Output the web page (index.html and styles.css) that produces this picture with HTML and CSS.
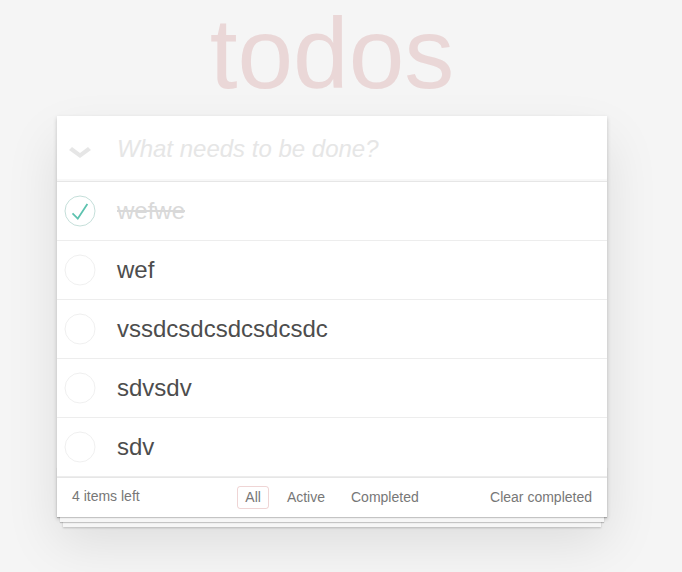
FILE: index.html
```html
<!DOCTYPE html>
<html lang="en">
<head>
<meta charset="utf-8">
<title>todos</title>
<link rel="stylesheet" href="styles.css">
</head>
<body>
<div class="page">
  <h1 class="title">todos</h1>
  <section class="todoapp">
    <header class="header">
      <span class="toggle-all">
        <svg width="22" height="11" viewBox="0 0 22 11"><polygon points="0,3 3,0 11,6 19,0 22,3 11,11" fill="#e6e6e6"/></svg>
      </span>
      <input class="new-todo" placeholder="What needs to be done?">
    </header>
    <ul class="todo-list">
      <li class="todo completed">
        <span class="check">
          <svg width="40" height="40" viewBox="-16.7 -16.7 133.3 133.3"><circle cx="50" cy="50" r="50" fill="none" stroke="#bddad5" stroke-width="3"/><path fill="#5dc2af" d="M72 25L42 71 27 56l-4 4 20 20 34-52z"/></svg>
        </span>
        <label class="todo-label">wefwe</label>
      </li>
      <li class="todo">
        <span class="check">
          <svg width="40" height="40" viewBox="-16.7 -16.7 133.3 133.3"><circle cx="50" cy="50" r="50" fill="none" stroke="#ededed" stroke-width="3"/></svg>
        </span>
        <label class="todo-label">wef</label>
      </li>
      <li class="todo">
        <span class="check">
          <svg width="40" height="40" viewBox="-16.7 -16.7 133.3 133.3"><circle cx="50" cy="50" r="50" fill="none" stroke="#ededed" stroke-width="3"/></svg>
        </span>
        <label class="todo-label">vssdcsdcsdcsdcsdc</label>
      </li>
      <li class="todo">
        <span class="check">
          <svg width="40" height="40" viewBox="-16.7 -16.7 133.3 133.3"><circle cx="50" cy="50" r="50" fill="none" stroke="#ededed" stroke-width="3"/></svg>
        </span>
        <label class="todo-label">sdvsdv</label>
      </li>
      <li class="todo">
        <span class="check">
          <svg width="40" height="40" viewBox="-16.7 -16.7 133.3 133.3"><circle cx="50" cy="50" r="50" fill="none" stroke="#ededed" stroke-width="3"/></svg>
        </span>
        <label class="todo-label">sdv</label>
      </li>
    </ul>
    <footer class="footer">
      <span class="todo-count">4 items left</span>
      <ul class="filters">
        <li><a class="filter selected">All</a></li>
        <li><a class="filter">Active</a></li>
        <li><a class="filter">Completed</a></li>
      </ul>
      <span class="clear-wrap"><button class="clear-completed">Clear completed</button></span>
    </footer>
  </section>
</div>
</body>
</html>
```
FILE: styles.css
```css
html, body {
  margin: 0;
  padding: 0;
}
body {
  background: #f5f5f5;
  color: #4d4d4d;
  font: 14px "Liberation Sans", Arial, sans-serif;
  line-height: 1.4em;
  min-height: 572px;
}
.page {
  width: 550px;
  margin: 0 0 0 57px;
  padding-top: 0;
  padding-bottom: 40px;
}
.title {
  margin: 0 0 10px 0;
  height: 106px;
  font-size: 100px;
  line-height: 106px;
  font-weight: 100;
  text-align: center;
  color: rgba(175, 47, 47, 0.15);
}
.todoapp {
  position: relative;
  background: #fff;
  box-shadow: 0 2px 4px 0 rgba(0, 0, 0, 0.2), 0 25px 50px 0 rgba(0, 0, 0, 0.1);
}
.header {
  display: flex;
  align-items: center;
  border-bottom: 1px solid #e6e6e6;
  box-shadow: inset 0 -2px 1px rgba(0, 0, 0, 0.03);
}
.toggle-all {
  width: 60px;
  flex: none;
  display: flex;
  justify-content: flex-start;
  padding-left: 12px;
  padding-top: 8px;
  box-sizing: border-box;
}
.toggle-all svg { display: block; }
.new-todo {
  flex: 1;
  min-width: 0;
  border: none;
  outline: none;
  background: transparent;
  margin: 0;
  padding: 16px 16px 16px 0;
  height: 65px;
  box-sizing: border-box;
  font-family: inherit;
  font-size: 24px;
  line-height: 33px;
  color: inherit;
}
.new-todo::placeholder {
  font-style: italic;
  font-weight: 300;
  color: #e6e6e6;
}
.todo-list {
  list-style: none;
  margin: 0;
  padding: 0;
}
.todo {
  display: flex;
  align-items: center;
  border-bottom: 1px solid #ededed;
}
.check {
  flex: none;
  width: 40px;
  height: 40px;
  margin-left: 3px;
}
.check svg { display: block; }
.todo-label {
  display: block;
  padding: 15px 15px 15px 17px;
  font-size: 24px;
  line-height: 28px;
  color: #4d4d4d;
  word-break: break-all;
}
.todo.completed .todo-label {
  color: #d9d9d9;
  text-decoration: line-through;
}
.footer {
  position: relative;
  display: flex;
  align-items: center;
  height: 20px;
  padding: 9px 15px 10px;
  color: #777;
  border-top: 1px solid #e6e6e6;
}
.footer::before {
  content: '';
  position: absolute;
  right: 0;
  bottom: 0;
  left: 0;
  height: 50px;
  overflow: hidden;
  box-shadow: 0 1px 1px rgba(0, 0, 0, 0.2),
              0 8px 0 -3px #f6f6f6,
              0 9px 1px -3px rgba(0, 0, 0, 0.2),
              0 16px 0 -6px #f6f6f6,
              0 17px 2px -6px rgba(0, 0, 0, 0.2);
  pointer-events: none;
}
.todo-count {
  flex: 1;
  text-align: left;
  position: relative;
}
.filters {
  list-style: none;
  margin: 0;
  padding: 0;
  display: flex;
  gap: 4px;
  position: relative;
}
.filter {
  display: block;
  margin: 3px;
  padding: 3px 7px;
  border: 1px solid transparent;
  border-radius: 3px;
  color: inherit;
  line-height: 15px;
  text-decoration: none;
}
.filter.selected {
  border-color: rgba(175, 47, 47, 0.2);
}
.clear-wrap {
  flex: 1;
  text-align: right;
  position: relative;
}
.clear-completed {
  margin: 0;
  padding: 0;
  border: 0;
  background: none;
  font: inherit;
  color: inherit;
  line-height: 20px;
}
```
